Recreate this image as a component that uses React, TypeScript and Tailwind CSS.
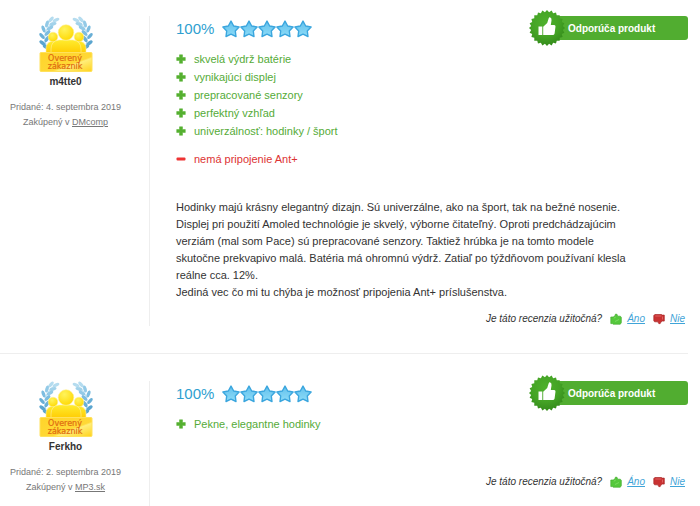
import React from 'react';

interface Review {
  id: string;
  author: string;
  date: string;
  shop: string;
  rating: string;
  pros: string[];
  cons: string[];
  paragraphs: string[];
}

const REVIEWS: Review[] = [
  {
    id: 'm4tte0',
    author: 'm4tte0',
    date: '4. septembra 2019',
    shop: 'DMcomp',
    rating: '100%',
    pros: [
      'skvelá výdrž batérie',
      'vynikajúci displej',
      'prepracované senzory',
      'perfektný vzhľad',
      'univerzálnosť: hodinky / šport',
    ],
    cons: ['nemá pripojenie Ant+'],
    paragraphs: [
      'Hodinky majú krásny elegantný dizajn. Sú univerzálne, ako na šport, tak na bežné nosenie. Displej pri použití Amoled technológie je skvelý, výborne čitateľný. Oproti predchádzajúcim verziám (mal som Pace) sú prepracované senzory. Taktiež hrúbka je na tomto modele skutočne prekvapivo malá. Batéria má ohromnú výdrž. Zatiaľ po týždňovom používaní klesla reálne cca. 12%.',
      'Jediná vec čo mi tu chýba je možnosť pripojenia Ant+ príslušenstva.',
    ],
  },
  {
    id: 'ferkho',
    author: 'Ferkho',
    date: '2. septembra 2019',
    shop: 'MP3.sk',
    rating: '100%',
    pros: ['Pekne, elegantne hodinky'],
    cons: [],
    paragraphs: [],
  },
];

// left laurel branch: x, y, rotation, colour
const LEAVES: [number, number, number, string][] = [
  [17, 4, -25, '#b5dcef'], [12, 3.5, -50, '#b5dcef'], [14, 8, -15, '#a2d2ea'],
  [8, 8, -75, '#93cae7'], [11, 12, -30, '#93cae7'], [4.5, 13, -110, '#7dbde0'],
  [8.5, 17, -45, '#7dbde0'], [3, 20, -130, '#69afd6'], [8, 23, -55, '#69afd6'],
  [3.5, 27, -145, '#5ba5cf'], [7, 31, -150, '#5ba5cf'],
];

const Laurel = () => (
  <g>
    <path d="M15 5C6 12 3 22 9 33" fill="none" stroke="#a9d6ec" strokeWidth="0.8" />
    {LEAVES.map(([x, y, r, fill]) => (
      <ellipse key={`${x}-${y}`} cx={x} cy={y} rx="3.6" ry="1.7" fill={fill} transform={`rotate(${r} ${x} ${y})`} />
    ))}
  </g>
);

const VerifiedBadge = () => (
  <svg viewBox="0 0 54 56" className="h-14 w-[54px]" role="img" aria-label="Overený zákazník">
    <defs>
      <radialGradient id="head" cx="40%" cy="30%" r="75%">
        <stop offset="0" stopColor="#fff35c" />
        <stop offset="1" stopColor="#ffd800" />
      </radialGradient>
      <linearGradient id="body" x1="0" y1="0" x2="0" y2="1">
        <stop offset="0" stopColor="#ffec2e" />
        <stop offset="1" stopColor="#ffca00" />
      </linearGradient>
      <linearGradient id="plate" x1="0" y1="0" x2="1" y2="1">
        <stop offset="0" stopColor="#ffd42a" />
        <stop offset="0.6" stopColor="#ffd836" />
        <stop offset="0.65" stopColor="#ffee7a" />
        <stop offset="1" stopColor="#ffd21c" />
      </linearGradient>
    </defs>
    <Laurel />
    <g transform="translate(54 0) scale(-1 1)">
      <Laurel />
    </g>
    <g stroke="#fff0a0" strokeWidth="0.6">
      <path d="M7 38v-6q0-5 6-7h28q6 2 6 7v6z" fill="url(#body)" />
      <circle cx="14" cy="21" r="4.8" fill="url(#head)" />
      <circle cx="40" cy="21" r="4.8" fill="url(#head)" />
      <path d="M12 38v-5q0-8 8-9h14q8 1 8 9v5z" fill="url(#body)" />
      <circle cx="27" cy="16.5" r="7.8" fill="url(#head)" />
    </g>
    <rect x="1" y="36.5" width="52" height="19" rx="1" fill="url(#plate)" stroke="#ffe15c" />
    <g fill="#e06a10" stroke="#e06a10" strokeWidth="0.2" fontFamily="DejaVu Sans, sans-serif" fontSize="8" textAnchor="middle">
      <text x="26" y="45">Overený</text>
      <text x="26" y="53">zákazník</text>
    </g>
  </svg>
);

const Star = () => (
  <svg viewBox="0 0 18 18" className="h-[18px] w-[18px]" aria-hidden="true">
    <defs>
      <linearGradient id="star" x1="0" y1="0" x2="0" y2="1">
        <stop offset="0" stopColor="#62c0ec" />
        <stop offset="1" stopColor="#8ddcf8" />
      </linearGradient>
    </defs>
    <path
      d="M9 1.1l2.7 4.9 5.4 1-3.8 4 .7 5.5-5-2.4-5 2.4.7-5.5-3.8-4 5.4-1z"
      fill="url(#star)"
      stroke="#3ba6de"
      strokeWidth="1.4"
      strokeLinejoin="round"
    />
  </svg>
);

const PlusIcon = () => (
  <svg viewBox="0 0 10 10" className="h-[10px] w-[10px]" aria-hidden="true">
    <path d="M3.5.8h3v2.700h2.800v3H6.500v2.800h-3V6.500H.7v-3h2.800z" fill="#55b030" stroke="#55b030" strokeWidth="0.5" strokeLinejoin="round" />
  </svg>
);

const MinusIcon = () => (
  <svg viewBox="0 0 10 10" className="h-[10px] w-[10px]" aria-hidden="true">
    <rect x="0.5" y="3.5" width="9" height="3" rx="1" fill="#ee3333" />
  </svg>
);

const SealIcon = () => {
  const points = Array.from({ length: 48 }, (_, i) => {
    const radius = i % 2 === 0 ? 18 : 16;
    const angle = (i * Math.PI) / 24;
    return `${18 + radius * Math.sin(angle)},${18 - radius * Math.cos(angle)}`;
  }).join(' ');

  return (
    <svg viewBox="0 0 36 36" className="relative z-10 h-9 w-9 shrink-0" aria-hidden="true">
      <defs>
        <radialGradient id="seal" cx="45%" cy="35%" r="65%">
          <stop offset="0" stopColor="#4eb02c" />
          <stop offset="0.6" stopColor="#44a325" />
          <stop offset="1" stopColor="#348b1b" />
        </radialGradient>
      </defs>
      <polygon points={points} fill="url(#seal)" />
      <path
        d="M9.5 16.5h3.8v8.500H9.500zM14.200 16.800l4-3.800 1.500-4.700q.4-1.300 1.600-.9 1.500.6 1.200 3L21.800 15h3.400q1.400.1 1.300 1.500l-.9 7q-.3 1.500-1.800 1.500h-9.600z"
        fill="#fff"
      />
    </svg>
  );
};

const ThumbUp = () => (
  <svg viewBox="0 0 12 12" className="h-3 w-3" aria-hidden="true">
    <path d="M.8 4h2.400L5 2.800l.4-1.600q1.400-.6 2 .8l-.1 1.200h3l1 1v5.500l-1 1.500H3.200l-.8-.6H.8z" fill="#55c83c" stroke="#45ad30" strokeWidth="0.7" />
    <path d="M3.800 5.200l2-1.200M5 8.500l4-2" stroke="#7edb64" strokeWidth="0.9" />
  </svg>
);

const ThumbDown = () => (
  <svg viewBox="0 0 12 12" className="h-3 w-3" aria-hidden="true">
    <path d="M.8 2.500l1-1h6.700l.8.600h2v6H9.300L7.800 9.200l-.6 1.400q-1.600.5-2-.8l.1-1H1.600L.8 7.800z" fill="#c93232" stroke="#a82828" strokeWidth="0.7" />
    <path d="M2.300 3h6M9.500 3.500v3" stroke="#e06666" strokeWidth="0.9" />
  </svg>
);

const ReviewSidebar: React.FC<{ review: Review }> = ({ review }) => (
  <aside className="w-[150px] shrink-0 border-r border-[#eeeeee] pb-[11px] pr-[18px] text-center">
    <div className="flex justify-center">
      <VerifiedBadge />
    </div>
    <h3 className="mt-[3px] text-[10px] leading-[14px] font-bold text-[#333333]">{review.author}</h3>
    <div className="mt-[11px] text-[9px] leading-[15px] text-[#777777]">
      <p>Pridané: {review.date}</p>
      <p>
        Zakúpený v <a href="#shop" className="underline">{review.shop}</a>
      </p>
    </div>
  </aside>
);

const ReviewCard: React.FC<{ review: Review }> = ({ review }) => (
  <article className="flex border-b border-[#eeeeee] py-[27px] first:pt-4 last:border-b-0 last:pb-0">
    <ReviewSidebar review={review} />

    <div className="flex min-w-0 flex-1 flex-col pl-[26px]">
      <div className="flex items-start justify-between">
        <div className="flex items-center gap-2 pt-1">
          <span className="text-[15px] leading-[18px] text-[#2f9fd0]">{review.rating}</span>
          <div className="flex">
            {[1, 2, 3, 4, 5].map((n) => (
              <Star key={n} />
            ))}
          </div>
        </div>
        <div className="flex h-6 w-[159px] items-center">
          <SealIcon />
          <span className="-ml-[18px] flex h-6 flex-1 items-center rounded-r-[3px] bg-[#51ad30] pl-[21px] text-[10px] font-bold text-white">
            Odporúča produkt
          </span>
        </div>
      </div>

      <div className="mt-[10px] flex flex-col gap-[10px] text-[11px] leading-[18px]">
        <ul className="text-[#55ab38]">
          {review.pros.map((text) => (
            <li key={text} className="flex items-center gap-2">
              <PlusIcon />
              {text}
            </li>
          ))}
        </ul>
        {review.cons.length > 0 && (
          <ul className="text-[#dd3333]">
            {review.cons.map((text) => (
              <li key={text} className="flex items-center gap-2">
                <MinusIcon />
                {text}
              </li>
            ))}
          </ul>
        )}
      </div>

      <div className="mt-[31px] pr-14 text-[11px] leading-[17px] text-[#333333]">
        {review.paragraphs.map((text) => (
          <p key={text}>{text}</p>
        ))}
      </div>

      <div className="mt-[11px] flex items-center justify-end pr-[3px] text-[10px] leading-[14px] text-[#333333] italic">
        <span>Je táto recenzia užitočná?</span>
        <a href="#yes" className="ml-2 flex items-center gap-[5px] text-[#3fa4d8]">
          <ThumbUp />
          <span className="underline">Áno</span>
        </a>
        <a href="#no" className="ml-2 flex items-center gap-[5px] text-[#3fa4d8]">
          <ThumbDown />
          <span className="underline">Nie</span>
        </a>
      </div>
    </div>
  </article>
);

const App: React.FC = () => {
  return (
    <main className="bg-white pr-3 font-['Liberation_Sans',Arial,sans-serif]">
      {REVIEWS.map((review) => (
        <ReviewCard key={review.id} review={review} />
      ))}
    </main>
  );
};

export default App;
